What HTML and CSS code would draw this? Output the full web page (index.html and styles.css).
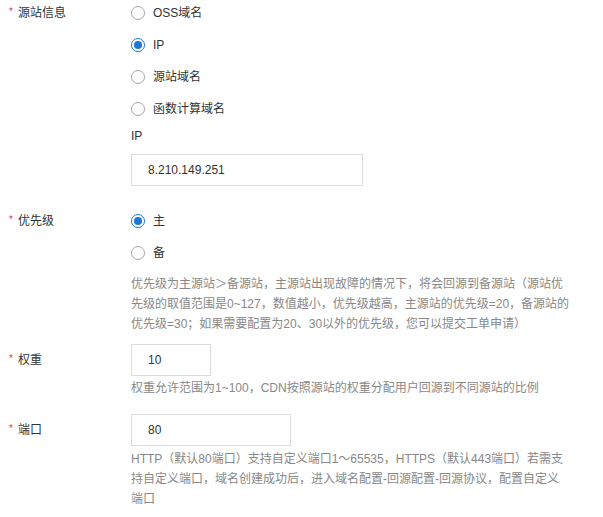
FILE: index.html
```html
<!DOCTYPE html>
<html lang="zh-CN">
<head>
<meta charset="utf-8">
<title>源站信息</title>
<link rel="stylesheet" href="styles.css">
</head>
<body>
<div class="form">
  <div class="form-item item-source">
    <div class="label"><span class="star">*</span>源站信息</div>
    <div class="control">
      <div class="radio-group">
        <label class="radio"><span class="dot"></span><span>OSS域名</span></label>
        <label class="radio checked"><span class="dot"></span><span>IP</span></label>
        <label class="radio"><span class="dot"></span><span>源站域名</span></label>
        <label class="radio"><span class="dot"></span><span>函数计算域名</span></label>
      </div>
      <div class="sub-label">IP</div>
      <div class="input input-ip">8.210.149.251</div>
    </div>
  </div>

  <div class="form-item item-priority">
    <div class="label"><span class="star">*</span>优先级</div>
    <div class="control">
      <div class="radio-group">
        <label class="radio checked"><span class="dot"></span><span>主</span></label>
        <label class="radio"><span class="dot"></span><span>备</span></label>
      </div>
      <div class="help help-priority">优先级为主源站＞备源站，主源站出现故障的情况下，将会回源到备源站（源站优<br>先级的取值范围是0~127，数值越小，优先级越高，主源站的优先级=20，备源站的<br>优先级=30；如果需要配置为20、30以外的优先级，您可以提交工单申请）</div>
    </div>
  </div>

  <div class="form-item item-weight">
    <div class="label label-input"><span class="star">*</span>权重</div>
    <div class="control">
      <div class="input input-weight">10</div>
      <div class="help help-weight">权重允许范围为1~100，CDN按照源站的权重分配用户回源到不同源站的比例</div>
    </div>
  </div>

  <div class="form-item item-port">
    <div class="label label-input"><span class="star">*</span>端口</div>
    <div class="control">
      <div class="input input-port">80</div>
      <div class="help help-port">HTTP（默认80端口）支持自定义端口1～65535，HTTPS（默认443端口）若需支<br>持自定义端口，域名创建成功后，进入域名配置-回源配置-回源协议，配置自定义<br>端口</div>
    </div>
  </div>
</div>
</body>
</html>
```

FILE: styles.css
```css
html, body {
  margin: 0;
  padding: 0;
  background: #ffffff;
}

body {
  font-family: "Liberation Sans", "Noto Sans CJK SC", sans-serif;
  font-size: 12px;
  color: #333333;
}

.form {
  display: flex;
  flex-direction: column;
  padding-top: 3px;
}

.form-item {
  display: grid;
  grid-template-columns: 131px 460px;
  align-items: start;
}

.item-priority { margin-top: 25px; }
.item-weight { margin-top: 10px; }
.item-port { margin-top: 16px; }

.label {
  padding-left: 9px;
  line-height: 20px;
  color: #333333;
  white-space: nowrap;
}

.label-input {
  line-height: 32px;
}

.star {
  display: inline-block;
  width: 9px;
  color: #e0443a;
  font-size: 10px;
  vertical-align: top;
  line-height: 18px;
}

.label-input .star {
  line-height: 30px;
}

.control {
  display: flex;
  flex-direction: column;
  align-items: flex-start;
}

.radio-group {
  display: flex;
  flex-direction: column;
  gap: 12px;
}

.radio {
  display: flex;
  align-items: center;
  gap: 8px;
  height: 20px;
  line-height: 20px;
  color: #333333;
}

.dot {
  box-sizing: border-box;
  width: 14px;
  height: 14px;
  border-radius: 50%;
  border: 1px solid #a8a8a8;
  background: #ffffff;
  display: flex;
  align-items: center;
  justify-content: center;
}

.radio.checked .dot {
  border-color: #1f78d6;
}

.radio.checked .dot::after {
  content: "";
  width: 8px;
  height: 8px;
  border-radius: 50%;
  background: #1f78d6;
}

.sub-label {
  margin-top: 7px;
  line-height: 20px;
  color: #333333;
}

.input {
  box-sizing: border-box;
  height: 32px;
  line-height: 30px;
  border: 1px solid #dcdcdc;
  padding-left: 16px;
  color: #333333;
  background: #ffffff;
}

.input-ip {
  margin-top: 8px;
  width: 232px;
}

.input-weight { width: 80px; }
.input-port { width: 160px; }

.help {
  color: #888888;
  line-height: 20px;
  white-space: nowrap;
}

.help-priority { margin-top: 11px; }
.help-weight { margin-top: 2px; }
.help-port { margin-top: 3px; }
```
